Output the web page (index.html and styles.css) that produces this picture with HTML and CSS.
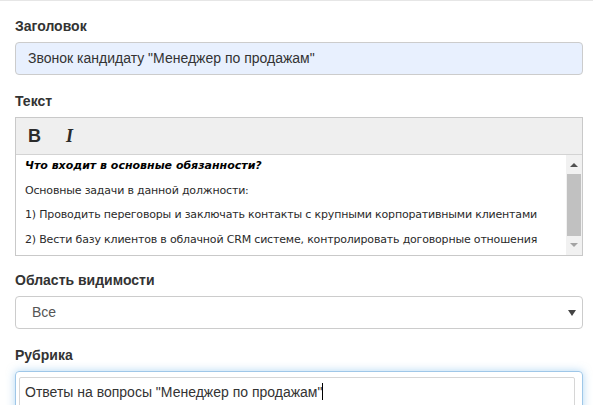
FILE: index.html
```html
<!DOCTYPE html>
<html lang="ru">
<head>
    <meta charset="UTF-8">
    <title>Вопрос</title>
    <link rel="stylesheet" href="styles.css">
</head>
<body>
    <div class="top-line"></div>

    <div class="form-group">
        <label class="form-label">Заголовок</label>
        <div class="form-control autofill">Звонок кандидату "Менеджер по продажам"</div>
    </div>

    <div class="form-group editor-group">
        <label class="form-label">Текст</label>
        <div class="editor">
            <div class="toolbar">
                <span class="tool tool-bold">B</span>
                <span class="tool tool-italic">I</span>
            </div>
            <div class="editor-body">
                <div class="editor-content">
                    <p><b><i>Что входит в основные обязанности?</i></b></p>
                    <p>Основные задачи в данной должности:</p>
                    <p>1) Проводить переговоры и заключать контакты с крупными корпоративными клиентами</p>
                    <p>2) Вести базу клиентов в облачной CRM системе, контролировать договорные отношения</p>
                </div>
                <div class="scrollbar">
                    <span class="arrow arrow-up"></span>
                    <span class="thumb"></span>
                    <span class="arrow arrow-down"></span>
                </div>
            </div>
        </div>
    </div>

    <div class="form-group">
        <label class="form-label">Область видимости</label>
        <div class="form-control select">
            <span class="select-value">Все</span>
            <span class="caret"></span>
        </div>
    </div>

    <div class="form-group">
        <label class="form-label">Рубрика</label>
        <div class="focus-wrap">
            <div class="inner-input">Ответы на вопросы "Менеджер по продажам"<span class="cursor"></span></div>
        </div>
    </div>
</body>
</html>
```

FILE: styles.css
```css
body {
    margin: 0;
    padding: 0 19px 0 15px;
    background: #fff;
    font-family: "Liberation Sans", Arial, sans-serif;
    font-size: 14px;
    color: #333;
}
.top-line {
    height: 1px;
    margin: 0 -10px 15px -15px;
    background: #e6e6e6;
}
.form-group {
    margin-bottom: 16px;
}
.editor-group {
    margin-bottom: 14px;
}
.form-label {
    display: block;
    font-weight: bold;
    line-height: 20px;
    margin-bottom: 6px;
}
.form-control {
    height: 31px;
    line-height: 31px;
    padding: 0 12px;
    border: 1px solid #ccc;
    border-radius: 4px;
    color: #333;
}
.autofill {
    background: #e8f0fe;
}

/* редактор */
.editor {
    border: 1px solid #c9c9c9;
}
.toolbar {
    height: 36px;
    background: #efefef;
    border-bottom: 1px solid #d3d3d3;
    display: flex;
    align-items: center;
    padding-left: 12px;
    gap: 25px;
}
.tool {
    font-size: 18px;
    color: #2b2b2b;
}
.tool-bold {
    font-weight: bold;
}
.tool-italic {
    font-family: "Liberation Serif", serif;
    font-style: italic;
    font-weight: bold;
}
.editor-body {
    display: flex;
    height: 100px;
}
.editor-content {
    flex: 1;
    padding: 1px 9px 0;
    font-family: "DejaVu Sans", Verdana, sans-serif;
    font-size: 11px;
    letter-spacing: -0.18px;
    color: #2a2a2a;
    overflow: hidden;
}
.editor-content p {
    margin: 0 0 4.7px;
    line-height: 20px;
    white-space: nowrap;
}
.editor-content b {
    color: #000;
    letter-spacing: 0;
}
.scrollbar {
    width: 16px;
    background: #f1f1f1;
    display: flex;
    flex-direction: column;
    align-items: center;
}
.arrow {
    width: 0;
    height: 0;
    border-left: 4px solid transparent;
    border-right: 4px solid transparent;
}
.arrow-up {
    margin: 8px 0 7px;
    border-bottom: 4px solid #505050;
}
.arrow-down {
    margin-top: 7px;
    border-top: 4px solid #a3a3a3;
}
.thumb {
    width: 14px;
    height: 62px;
    background: #c1c1c1;
}

/* выпадающий список */
.select {
    display: flex;
    justify-content: space-between;
    align-items: center;
    padding: 0 6px 0 16px;
    color: #555;
}
.caret {
    width: 0;
    height: 0;
    border-left: 4px solid transparent;
    border-right: 4px solid transparent;
    border-top: 6px solid #444;
}

/* поле в фокусе */
.focus-wrap {
    height: 60px;
    padding: 5px 7px 0 3px;
    border: 1px solid #9fc7e8;
    border-radius: 4px;
    box-shadow: 0 0 8px rgba(102, 175, 233, 0.5);
}
.inner-input {
    height: 28px;
    line-height: 28px;
    padding: 0 5px;
    border: 1px solid #d6d6d6;
    border-radius: 2px;
    color: #333;
}
.cursor {
    display: inline-block;
    width: 1px;
    height: 17px;
    background: #000;
    vertical-align: -3px;
}
```
